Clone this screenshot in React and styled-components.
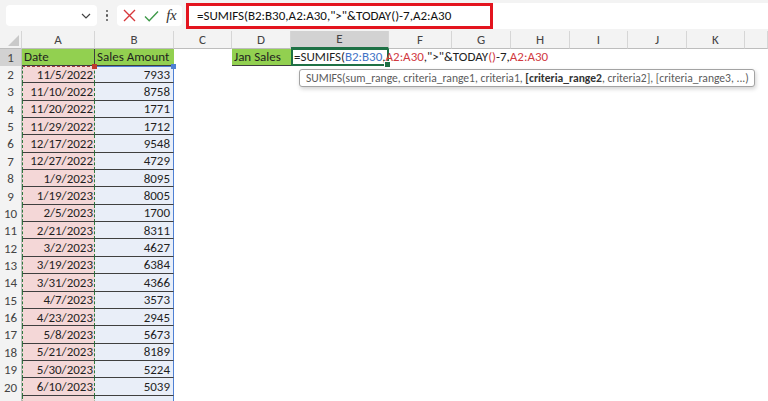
import React from 'react';
import styled, { createGlobalStyle } from 'styled-components';

const GlobalStyle = createGlobalStyle`
    html, body {
        margin: 0;
        padding: 0;
        background: #ffffff;
        overflow: hidden;
    }
    body {
        width: 768px;
        height: 401px;
        font-family: Carlito, "Liberation Sans Narrow", "Liberation Sans", sans-serif;
    }
`

const COLS = [22, 73, 79, 58, 59, 98, 63, 59, 59, 58, 59, 58, 23];
const LETTERS = ['A', 'B', 'C', 'D', 'E', 'F', 'G', 'H', 'I', 'J', 'K', ''];
const ROW_H = 17.37;

const DATA = [
    ['11/5/2022', 7933],
    ['11/10/2022', 8758],
    ['11/20/2022', 1771],
    ['11/29/2022', 1712],
    ['12/17/2022', 9548],
    ['12/27/2022', 4729],
    ['1/9/2023', 8095],
    ['1/19/2023', 8005],
    ['2/5/2023', 1700],
    ['2/21/2023', 8311],
    ['3/2/2023', 4627],
    ['3/19/2023', 6384],
    ['3/31/2023', 4366],
    ['4/7/2023', 3573],
    ['4/23/2023', 2945],
    ['5/8/2023', 5673],
    ['5/21/2023', 8189],
    ['5/30/2023', 5224],
    ['6/10/2023', 5039],
    ['', ''],
];

const Wrap = styled.div`
    position: relative;
    width: 768px;
    height: 401px;
    overflow: hidden;
`
const Toolbar = styled.div`
    height: 31px;
    background: #f3f3f3;
    display: flex;
    align-items: center;
    padding-left: 6px;
    box-sizing: border-box;
`
const NameBox = styled.div`
    width: 91px;
    height: 21px;
    background: #ffffff;
    border-radius: 4px;
    display: flex;
    align-items: center;
    justify-content: flex-end;
    padding-right: 6px;
    box-sizing: border-box;
`
const Dots = styled.div`
    width: 20px;
    display: flex;
    flex-direction: column;
    align-items: center;
    gap: 2px;
    span {
        width: 2.5px;
        height: 2.5px;
        border-radius: 50%;
        background: #555;
    }
`
const ButtonGroup = styled.div`
    width: 65px;
    height: 21px;
    background: #ffffff;
    border-radius: 4px;
    display: flex;
    align-items: center;
    justify-content: space-around;
    padding: 0 2px;
    box-sizing: border-box;
`
const Fx = styled.span`
    font-family: "Liberation Serif", serif;
    font-style: italic;
    font-size: 15px;
    color: #333;
    letter-spacing: -0.5px;
`
const FormulaBar = styled.div`
    flex: 1;
    height: 26px;
    margin-left: 4px;
    background: #ffffff;
    display: flex;
    align-items: center;
`
const FormulaHighlight = styled.div`
    width: 307px;
    height: 26px;
    border: 3px solid #e3141e;
    box-sizing: border-box;
    display: flex;
    align-items: center;
    padding-left: 8px;
    font-size: 13px;
    color: #111;
    white-space: nowrap;
`
const Sheet = styled.div`
    display: grid;
    grid-template-columns: ${COLS.map((c) => c + 'px').join(' ')};
    grid-template-rows: 17.5px;
    grid-auto-rows: ${ROW_H}px;
    font-size: 13px;
    color: #1f1f1f;
`
const ColHead = styled.div`
    background: ${(p) => (p.$active ? '#d2d2d2' : '#f3f3f3')};
    border-right: 1px solid #d6d6d6;
    border-bottom: ${(p) => (p.$active ? '2px solid #1e7145' : '1px solid #bdbdbd')};
    box-sizing: border-box;
    display: flex;
    align-items: center;
    justify-content: center;
    color: #444;
    font-size: 13px;
`
const Corner = styled(ColHead)`
    position: relative;
    &::after {
        content: '';
        position: absolute;
        right: 2px;
        bottom: 2px;
        border-left: 11px solid transparent;
        border-bottom: 11px solid #c9c9c9;
    }
`
const RowHead = styled.div`
    background: ${(p) => (p.$active ? '#d2d2d2' : '#f3f3f3')};
    border-right: 1px solid #bdbdbd;
    box-sizing: border-box;
    display: flex;
    align-items: center;
    justify-content: center;
    color: #444;
    font-size: 13px;
`
const Cell = styled.div`
    position: relative;
    box-sizing: border-box;
    display: flex;
    align-items: center;
    justify-content: ${(p) => (p.$right ? 'flex-end' : 'flex-start')};
    padding: 0 2px;
    white-space: nowrap;
    background: ${(p) => p.$bg || '#ffffff'};
    border-bottom: ${(p) => (p.$line ? '1px solid #3f3f3f' : 'none')};
    border-right: ${(p) => (p.$divider ? '1px solid #3f3f3f' : 'none')};
`
const DateCell = styled(Cell)`
    background: #f4d7d7;
    border-left: 1.5px dashed #2f7a3f;
    border-right: 1.5px dashed #2f7a3f;
    border-top: ${(p) => (p.$first ? '1.5px dashed #a0403c' : 'none')};
    padding-right: 1px;
`
const AmountCell = styled(Cell)`
    background: #e9eef8;
    border-right: 1.5px solid #4f81d4;
    border-top: ${(p) => (p.$first ? '1.5px solid #4f81d4' : 'none')};
    padding-right: 3px;
`
const Handle = styled.span`
    position: absolute;
    right: -3px;
    top: -3px;
    width: 5px;
    height: 5px;
    background: ${(p) => p.$color};
    z-index: 2;
`
const EditCell = styled(Cell)`
    overflow: visible;
    z-index: 3;
    border: 2px solid #1e7145;
    border-top-width: 1px;
    padding-left: 1px;
    &::after {
        content: '';
        position: absolute;
        right: -4px;
        bottom: -4px;
        width: 5px;
        height: 5px;
        background: #1e7145;
        border: 1px solid #fff;
    }
`
const Ref = styled.span`
    color: ${(p) => p.$color};
`
const Caret = styled.span`
    display: inline-block;
    width: 1px;
    height: 15px;
    background: #000;
    vertical-align: middle;
    margin-left: 1px;
`
const Tip = styled.div`
    position: absolute;
    left: 299px;
    top: 69px;
    width: 456px;
    height: 18px;
    box-sizing: border-box;
    border: 1px solid #a3a3a3;
    border-radius: 3px;
    background: #ffffff;
    box-shadow: 1px 2px 4px rgba(0, 0, 0, 0.18);
    font-size: 11.6px;
    color: #5b5b5b;
    display: flex;
    align-items: center;
    padding-left: 6px;
    white-space: nowrap;
    z-index: 5;
    b {
        color: #333;
    }
`

const Formula = () => (
    <>
        =SUMIFS(<Ref $color="#3f73c6">B2:B30</Ref>,<Ref $color="#d1393f">A2:A30</Ref>,"&gt;"&amp;TODAY
        <Ref $color="#d1393f">()</Ref>-7,<Ref $color="#d1393f">A2:A30</Ref>
    </>
);

const App = () => {
    const rowCells = (idx) => {
        const r = idx + 1;
        const cells = [];
        if (r === 1) {
            cells.push(<Cell key="a" $bg="#92d050" $line $divider>Date</Cell>);
            cells.push(<Cell key="b" $bg="#92d050" $line>Sales Amount</Cell>);
            cells.push(<Cell key="c" />);
            cells.push(<Cell key="d" $bg="#92d050" $line>Jan Sales</Cell>);
            cells.push(
                <EditCell key="e">
                    <Formula />
                    <Caret />
                </EditCell>
            );
            for (let i = 5; i < 12; i++) cells.push(<Cell key={i} />);
            return cells;
        }
        const [date, amount] = DATA[r - 2];
        cells.push(
            <DateCell key="a" $right $line $first={r === 2}>
                {date}
                {r === 2 && <Handle $color="#c0392b" />}
            </DateCell>
        );
        cells.push(
            <AmountCell key="b" $right $line $first={r === 2}>
                {amount}
                {r === 2 && <Handle $color="#4f81d4" />}
            </AmountCell>
        );
        for (let i = 2; i < 12; i++) cells.push(<Cell key={i} />);
        return cells;
    };

    return (
        <Wrap>
            <GlobalStyle />
            <Toolbar>
                <NameBox>
                    <svg width="10" height="6" viewBox="0 0 10 6">
                        <path d="M1 1l4 4 4-4" fill="none" stroke="#444" strokeWidth="1.2" />
                    </svg>
                </NameBox>
                <Dots>
                    <span />
                    <span />
                    <span />
                </Dots>
                <ButtonGroup>
                    <svg width="13" height="13" viewBox="0 0 13 13">
                        <path d="M1 1l11 11M12 1L1 12" stroke="#d7383c" strokeWidth="1.4" />
                    </svg>
                    <svg width="15" height="12" viewBox="0 0 15 12">
                        <path d="M1 6.5l4.2 4.2L14 1.5" fill="none" stroke="#3f9a4a" strokeWidth="1.4" />
                    </svg>
                    <Fx>fx</Fx>
                </ButtonGroup>
                <FormulaBar>
                    <FormulaHighlight>=SUMIFS(B2:B30,A2:A30,"&gt;"&amp;TODAY()-7,A2:A30</FormulaHighlight>
                </FormulaBar>
            </Toolbar>
            <Sheet>
                <Corner />
                {LETTERS.map((l, i) => (
                    <ColHead key={i} $active={l === 'E'}>{l}</ColHead>
                ))}
                {Array.from({ length: 21 }).map((_, idx) => (
                    <React.Fragment key={idx}>
                        <RowHead $active={idx === 0}>{idx < 20 ? idx + 1 : ''}</RowHead>
                        {rowCells(idx)}
                    </React.Fragment>
                ))}
            </Sheet>
            <Tip>
                SUMIFS(sum_range, criteria_range1, criteria1,&nbsp;<b>[criteria_range2</b>, criteria2], [criteria_range3, ...)
            </Tip>
        </Wrap>
    );
};

export default App;
